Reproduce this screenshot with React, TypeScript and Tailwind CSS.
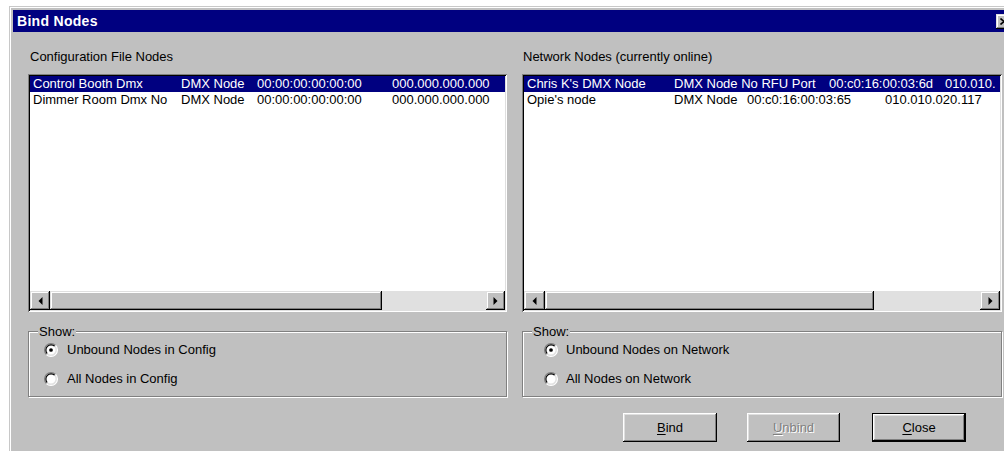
import clsx from "clsx";

// Win95-style bevels
const raised =
  "bg-[#c0c0c0] shadow-[inset_-1px_-1px_0_#000,inset_1px_1px_0_#dfdfdf,inset_-2px_-2px_0_#808080,inset_2px_2px_0_#fff]";
const sunken =
  "shadow-[inset_1px_1px_0_#808080,inset_-1px_-1px_0_#fff,inset_2px_2px_0_#000,inset_-2px_-2px_0_#dfdfdf]";
const etched =
  "border border-[#808080] shadow-[inset_1px_1px_0_#fff,1px_1px_0_#fff]";

type Row = { cells: string[]; widths: string[]; selected?: boolean };

const configRows: Row[] = [
  {
    cells: ["Control Booth Dmx", "DMX Node", "00:00:00:00:00:00", "000.000.000.000"],
    widths: ["w-[148px]", "w-[76px]", "w-[135px]", ""],
    selected: true,
  },
  {
    cells: ["Dimmer Room Dmx No", "DMX Node", "00:00:00:00:00:00", "000.000.000.000"],
    widths: ["w-[148px]", "w-[76px]", "w-[135px]", ""],
  },
];

const networkRows: Row[] = [
  {
    cells: ["Chris K's DMX Node", "DMX Node No RFU Port", "00:c0:16:00:03:6d", "010.010."],
    widths: ["w-[147px]", "w-[155px]", "w-[116px]", ""],
    selected: true,
  },
  {
    cells: ["Opie's node", "DMX Node", "00:c0:16:00:03:65", "010.010.020.117"],
    widths: ["w-[147px]", "w-[73px]", "w-[138px]", ""],
  },
];

function Arrow({ dir }: { dir: "left" | "right" }) {
  return (
    <svg width="5" height="8" viewBox="0 0 5 8">
      <polygon points={dir === "left" ? "4.5,0 0.5,4 4.5,8" : "0.5,0 4.5,4 0.5,8"} fill="#000" />
    </svg>
  );
}

function ListBox({ rows, thumb, leftBtn, rightBtn }: { rows: Row[]; thumb: string; leftBtn: string; rightBtn: string }) {
  return (
    <div className={clsx("mt-[9px] flex h-[238px] flex-col bg-white p-[2px]", sunken)}>
      <div className="flex-1 overflow-hidden">
        {rows.map((r, i) => (
          <div
            key={i}
            className={clsx(
              "flex h-[16px] items-center whitespace-nowrap pl-[3px]",
              r.selected ? "bg-[#000080] text-white" : "text-black"
            )}
          >
            {r.cells.map((c, j) => (
              <span key={j} className={clsx("shrink-0", r.widths[j])}>
                {c}
              </span>
            ))}
          </div>
        ))}
      </div>
      <div className="flex h-[19px] shrink-0">
        <div className={clsx("flex items-center justify-center", leftBtn, raised)}>
          <Arrow dir="left" />
        </div>
        <div className={clsx(thumb, raised)} />
        <div className="flex-1 bg-[#e0e0e0]" />
        <div className={clsx("flex items-center justify-center", rightBtn, raised)}>
          <Arrow dir="right" />
        </div>
      </div>
    </div>
  );
}

function Radio({ checked }: { checked?: boolean }) {
  return (
    <svg width="14" height="14" viewBox="0 0 12 12" className="shrink-0">
      <circle cx="6" cy="6" r="5" fill="#fff" />
      <path d="M9.89 2.11A5.5 5.5 0 0 0 2.11 9.89" fill="none" stroke="#808080" strokeWidth="1" />
      <path d="M9.18 2.82A4.5 4.5 0 0 0 2.82 9.18" fill="none" stroke="#000" strokeWidth="1" />
      <path d="M2.11 9.89A5.5 5.5 0 0 0 9.89 2.11" fill="none" stroke="#fff" strokeWidth="1" />
      <path d="M2.82 9.18A4.5 4.5 0 0 0 9.18 2.82" fill="none" stroke="#dfdfdf" strokeWidth="1" />
      {checked && <circle cx="6" cy="6" r="1.6" fill="#000" />}
    </svg>
  );
}

function ShowGroup({ options, pad, gap }: { options: string[]; pad: string; gap: string }) {
  return (
    <div className={clsx("mt-[19px] h-[66px]", etched)}>
      <span className="-mt-[8px] ml-[9px] block w-fit bg-[#c0c0c0] px-[1px]">Show:</span>
      <div className={clsx("mt-[2px] flex flex-col gap-[13px]", pad)}>
        {options.map((o, i) => (
          <label key={o} className={clsx("flex h-[16px] items-center", gap)}>
            <Radio checked={i === 0} />
            <span>{o}</span>
          </label>
        ))}
      </div>
    </div>
  );
}

function Button({ children, width, isDefault, disabled }: { children: React.ReactNode; width: string; isDefault?: boolean; disabled?: boolean }) {
  return (
    <button
      className={clsx(
        "flex h-[29px] items-center justify-center",
        width,
        isDefault
          ? "border border-black bg-[#c0c0c0] shadow-[inset_-1px_-1px_0_#000,inset_1px_1px_0_#fff,inset_-2px_-2px_0_#808080,inset_2px_2px_0_#dfdfdf]"
          : "bg-[#c0c0c0] shadow-[inset_-1px_-1px_0_#000,inset_1px_1px_0_#fff,inset_-2px_-2px_0_#808080,inset_2px_2px_0_#dfdfdf]",
        disabled ? "text-[#808080] [text-shadow:1px_1px_0_#fff]" : "text-black"
      )}
    >
      {children}
    </button>
  );
}

export default function App() {
  return (
    <div className="h-[451px] w-[1004px] overflow-hidden bg-white pl-[9px] pt-[6px] font-['Liberation_Sans',Arial,sans-serif] text-[13px] leading-[16px] text-black">
      <div className="h-[460px] w-[1010px] border-l border-t border-[#c8c8c8] bg-[#c0c0c0] p-[3px] shadow-[inset_1px_1px_0_#fff]">
        {/* title bar */}
        <div className="flex h-[22px] items-center justify-between bg-[#000080] pl-[4px] pr-[4px]">
          <span className="text-[14px] font-bold tracking-[0.3px] text-white">Bind Nodes</span>
          <div className={clsx("flex h-[15px] w-[16px] items-center justify-center", raised)}>
            <svg width="8" height="7" viewBox="0 0 8 7">
              <path d="M0.5 0.5L7.5 6.5M7.5 0.5L0.5 6.5" stroke="#000" strokeWidth="1.6" />
            </svg>
          </div>
        </div>

        <div className="flex gap-[15px] pl-[15px]">
          <div className="w-[479px]">
            <div className="mt-[17px] pl-[2px]">Configuration File Nodes</div>
            <ListBox rows={configRows} thumb="w-[332px]" leftBtn="w-[20px]" rightBtn="w-[19px]" />
            <ShowGroup
              options={["Unbound Nodes in Config", "All Nodes in Config"]}
              pad="pl-[15px]"
              gap="gap-[9px]"
            />
          </div>

          <div className="w-[480px]">
            <div className="mt-[17px] pl-[1px]">Network Nodes (currently online)</div>
            <ListBox rows={networkRows} thumb="w-[329px]" leftBtn="w-[21px]" rightBtn="w-[20px]" />
            <ShowGroup
              options={["Unbound Nodes on Network", "All Nodes on Network"]}
              pad="pl-[21px]"
              gap="gap-[8px]"
            />
            <div className="ml-[101px] mt-[16px] flex">
              <Button width="w-[94px]">
                <span className="underline underline-offset-2">B</span>ind
              </Button>
              <div className="ml-[30px]">
                <Button width="w-[93px]" disabled>
                  <span className="underline underline-offset-2">U</span>nbind
                </Button>
              </div>
              <div className="ml-[32px]">
                <Button width="w-[94px]" isDefault>
                  <span className="underline underline-offset-2">C</span>lose
                </Button>
              </div>
            </div>
          </div>
        </div>
      </div>
    </div>
  );
}
